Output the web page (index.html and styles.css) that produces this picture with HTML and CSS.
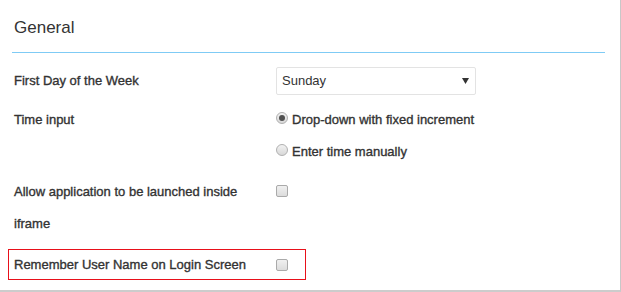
FILE: index.html
```html
<!DOCTYPE html>
<html>
<head>
<meta charset="utf-8">
<link rel="stylesheet" href="styles.css">
</head>
<body>
<div class="panel">
  <h2 class="heading">General</h2>
  <div class="row row-first">
    <div class="label">First Day of the Week</div>
    <div class="control">
      <div class="select">
        <span>Sunday</span>
        <svg class="arrow" width="7" height="6" viewBox="0 0 7 6"><path d="M0 0H7L3.5 6Z" fill="#333"/></svg>
      </div>
    </div>
  </div>
  <div class="row row-time">
    <div class="label">Time input</div>
    <div class="control">
      <div class="option"><span class="radio checked"></span><span>Drop-down with fixed increment</span></div>
      <div class="option"><span class="radio"></span><span>Enter time manually</span></div>
    </div>
  </div>
  <div class="row row-iframe">
    <div class="label">Allow application to be launched inside iframe</div>
    <div class="control"><span class="checkbox"></span></div>
  </div>
  <div class="row row-remember">
    <div class="label">Remember User Name on Login Screen</div>
    <div class="control"><span class="checkbox"></span></div>
  </div>
</div>
</body>
</html>
```
FILE: styles.css
```css
html, body {
  margin: 0;
  padding: 0;
  background: #fff;
}
body {
  font-family: "Liberation Sans", Arial, sans-serif;
  color: #333;
  width: 621px;
  height: 292px;
  overflow: hidden;
}
.panel {
  box-sizing: border-box;
  width: 621px;
  height: 292px;
  border-right: 1px solid #c8c8c8;
  border-bottom: 2px solid #cccccc;
}
.heading {
  margin: 0 15px 0 12px;
  padding: 18px 0 14px 2px;
  font-size: 17px;
  font-weight: normal;
  line-height: 20px;
  border-bottom: 1px solid #7fcbf5;
}
.row {
  display: flex;
  font-size: 13px;
  font-weight: normal;
  -webkit-text-stroke: 0.35px #333;
  line-height: 32px;
  margin-left: 14px;
}
.label {
  width: 250px;
  flex: none;
}
.control {
  margin-left: 12px;
}
.row-first {
  margin-top: 12px;
  align-items: center;
}
.select {
  box-sizing: border-box;
  width: 200px;
  height: 28px;
  border: 1px solid #e3e3e3;
  border-radius: 2px;
  display: flex;
  align-items: center;
  justify-content: space-between;
  padding: 0 6px 0 5px;
  font-weight: normal;
  -webkit-text-stroke: 0;
  line-height: 26px;
}
.arrow {
  display: block;
}
.row-time {
  margin-top: 7px;
}
.option {
  display: flex;
  align-items: center;
  height: 32px;
}
.radio {
  box-sizing: border-box;
  width: 12px;
  height: 12px;
  border-radius: 50%;
  border: 1px solid #b0b0b0;
  background: linear-gradient(#f2f2f2, #d8d8d8);
  margin: 0 4px 4px 0;
  display: flex;
  align-items: center;
  justify-content: center;
}
.radio.checked::after {
  content: "";
  width: 6px;
  height: 6px;
  border-radius: 50%;
  background: #505050;
}
.checkbox {
  display: block;
  box-sizing: border-box;
  width: 12px;
  height: 12px;
  border: 1px solid #aaa;
  border-radius: 2px;
  background: linear-gradient(#f0f0f0, #dcdcdc);
}
.row-iframe {
  margin-top: 8px;
}
.row-iframe .checkbox {
  margin-top: 9px;
}
.row-remember {
  margin: 9px 0 0 8px;
  padding-left: 5px;
  width: 298px;
  box-sizing: border-box;
  border: 1px solid #e8101a;
  line-height: 29px;
  align-items: center;
}
.row-remember .control {
  margin-left: 12px;
}
```
